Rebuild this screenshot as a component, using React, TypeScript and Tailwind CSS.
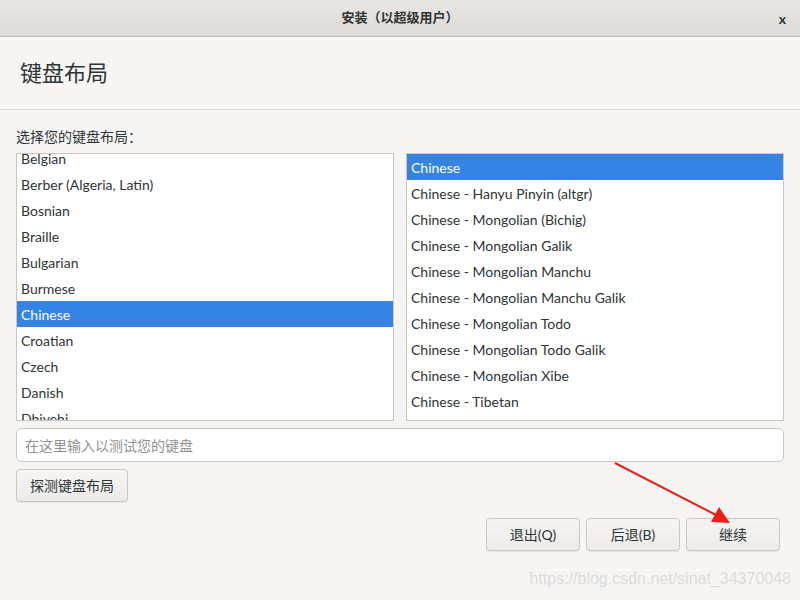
import React from 'react';

const leftItems = ['Belgian', 'Berber (Algeria, Latin)', 'Bosnian', 'Braille', 'Bulgarian', 'Burmese', 'Chinese', 'Croatian', 'Czech', 'Danish', 'Dhivehi'];
const rightItems = [
    'Chinese',
    'Chinese - Hanyu Pinyin (altgr)',
    'Chinese - Mongolian (Bichig)',
    'Chinese - Mongolian Galik',
    'Chinese - Mongolian Manchu',
    'Chinese - Mongolian Manchu Galik',
    'Chinese - Mongolian Todo',
    'Chinese - Mongolian Todo Galik',
    'Chinese - Mongolian Xibe',
    'Chinese - Tibetan',
];

const font = "font-['Lato','Noto_Sans_CJK_SC',sans-serif]";

const Row: React.FC<{ label: string; selected?: boolean }> = ({ label, selected }) => (
    <div className={`h-[26px] px-[4px] flex items-center text-[14px] ${selected ? 'bg-[#3584e4] text-white' : 'text-[#2e3436]'}`}>
        {label}
    </div>
);

const Btn: React.FC<{ label: string; className?: string }> = ({ label, className }) => (
    <button className={`h-[33px] rounded-[4px] border border-[#cdc7c2] bg-gradient-to-b from-[#f6f5f4] to-[#edebe9] shadow-[0_1px_1px_rgba(0,0,0,0.07)] text-[14px] text-[#2e3436] ${className ?? ''}`}>
        {label}
    </button>
);

export default function App() {
    return (
        <div className={`w-[800px] h-[600px] bg-[#f6f5f4] flex flex-col relative overflow-hidden ${font}`}>
            {/* title bar */}
            <div className="h-[37px] shrink-0 bg-gradient-to-b from-[#e8e6e3] to-[#dedad6] border-b border-[#bfb8b1] flex items-center justify-center relative">
                <span className="text-[13px] font-bold text-[#2e3436]">安装（以超级用户）</span>
                <span className="absolute right-[14px] top-[8px] text-[14px] font-bold text-[#2e3436]">x</span>
            </div>

            {/* header */}
            <div className="h-[73px] shrink-0 border-b border-[#dcd9d5] flex items-center px-[20px]">
                <h1 className="text-[22px] text-[#2e3436] -mt-[2px]">键盘布局</h1>
            </div>

            <div className="px-[16px] flex flex-col">
                <div className="mt-[17px] h-[20px] text-[14px] text-[#2e3436] leading-[20px]">选择您的键盘布局：</div>

                <div className="mt-[6px] flex gap-[12px]">
                    <div className="flex-1 h-[268px] bg-white border border-[#cdc7c2] overflow-hidden">
                        <div className="-mt-[9px]">
                            {leftItems.map(i => <Row key={i} label={i} selected={i === 'Chinese'} />)}
                        </div>
                    </div>
                    <div className="flex-1 h-[268px] bg-white border border-[#cdc7c2] overflow-hidden">
                        <div>
                            {rightItems.map((i, idx) => <Row key={i} label={i} selected={idx === 0} />)}
                        </div>
                    </div>
                </div>

                <div className="mt-[7px] h-[34px] bg-white border border-[#cdc7c2] rounded-[5px] flex items-center px-[8px] text-[14px] text-[#919191]">
                    在这里输入以测试您的键盘
                </div>

                <div className="mt-[7px]">
                    <Btn label="探测键盘布局" className="w-[112px]" />
                </div>

                <div className="mt-[16px] flex justify-end gap-[6px] pr-[4px]">
                    <Btn label="退出(Q)" className="w-[94px]" />
                    <Btn label="后退(B)" className="w-[94px]" />
                    <Btn label="继续" className="w-[94px]" />
                </div>
            </div>

            {/* annotation arrow */}
            <svg className="absolute left-0 top-0" width="800" height="600">
                <line x1="615" y1="463" x2="716" y2="515" stroke="#e8201a" strokeWidth="2" />
                <polygon points="730,523 711,522 719,507" fill="#e8201a" />
            </svg>

            {/* watermark */}
            <div className="absolute right-[9px] bottom-[9px] text-[16px] text-[#dddbd9] font-['Liberation_Sans',sans-serif]">
                https://blog.csdn.net/sinat_34370048
            </div>
        </div>
    );
}
